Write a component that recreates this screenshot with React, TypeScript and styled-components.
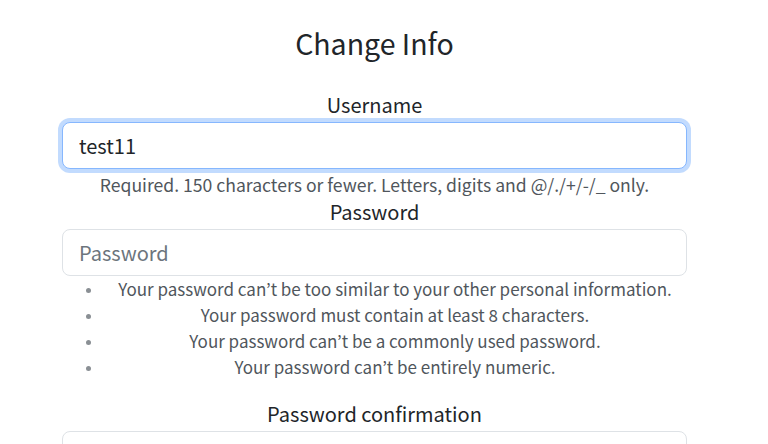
import React from "react";
import styled, { createGlobalStyle } from "styled-components";

const Global = createGlobalStyle`
  * { box-sizing: border-box; }
  body {
    margin: 0;
    background: #fff;
    color: #212529;
    font-family: "Noto Sans CJK KR", "Noto Sans", sans-serif;
    font-size: 16px;
    line-height: 1.5;
  }
`;

const Page = styled.div`
  width: 768px;
  height: 444px;
  overflow: hidden;
  padding: 0 81px 0 62px;
`;

const Title = styled.h3`
  margin: 26px 0 30px;
  font-size: 28.5px;
  font-weight: 400;
  line-height: 1.2;
  text-align: center;
`;

const Form = styled.form`
  display: flex;
  flex-direction: column;
`;

const Label = styled.label`
  display: block;
  font-size: 20px;
  line-height: 30px;
  text-align: center;
  margin-bottom: 2px;
`;

const Input = styled.input<{ $focused?: boolean }>`
  display: block;
  width: 100%;
  height: 47px;
  padding: 8px 16px;
  font-family: inherit;
  font-size: 20px;
  color: #212529;
  background: #fff;
  border: 1px solid ${(p) => (p.$focused ? "#86b7fe" : "#dee2e6")};
  border-radius: 8px;
  outline: none;
  box-shadow: ${(p) => (p.$focused ? "0 0 0 4px rgba(13,110,253,.25)" : "none")};
  &::placeholder { color: #6c757d; }
`;

const Help = styled.div`
  margin-top: 4px;
  font-size: 17.6px;
  line-height: 24px;
  color: #50565c;
  text-align: center;
  white-space: nowrap;
`;

const Rules = styled.ul`
  margin: 0 0 20px;
  padding-left: 41px;
  font-size: 17px;
  line-height: 25.8px;
  color: #50565c;
  li { text-align: center; }
  li::marker { color: #8a8f94; font-size: 13px; }
`;

export default function App() {
  return (
    <>
      <Global />
      <Page>
        <Title>Change Info</Title>
        <Form>
          <Label htmlFor="u">Username</Label>
          <Input id="u" $focused defaultValue="test11" />
          <Help>Required. 150 characters or fewer. Letters, digits and @/./+/-/_ only.</Help>
          <Label htmlFor="p">Password</Label>
          <Input id="p" type="password" placeholder="Password" />
          <Rules>
            <li>Your password can’t be too similar to your other personal information.</li>
            <li>Your password must contain at least 8 characters.</li>
            <li>Your password can’t be a commonly used password.</li>
            <li>Your password can’t be entirely numeric.</li>
          </Rules>
          <Label htmlFor="c">Password confirmation</Label>
          <Input id="c" type="password" />
        </Form>
      </Page>
    </>
  );
}
